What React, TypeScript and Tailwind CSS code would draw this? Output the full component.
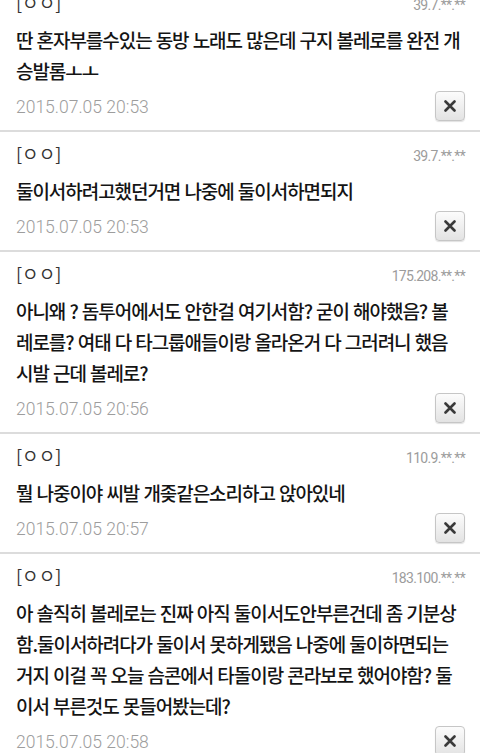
import React from "react";

type Comment = { ip: string; lines: string[]; date: string };

const comments: Comment[] = [
  {
    ip: "39.7.**.**",
    lines: ["딴 혼자부를수있는 동방 노래도 많은데 구지 볼레로를 완전 개", "승발롬ㅗㅗ"],
    date: "2015.07.05 20:53",
  },
  {
    ip: "39.7.**.**",
    lines: ["둘이서하려고했던거면 나중에 둘이서하면되지"],
    date: "2015.07.05 20:53",
  },
  {
    ip: "175.208.**.**",
    lines: [
      "아니왜 ? 돔투어에서도 안한걸 여기서함? 굳이 해야했음? 볼",
      "레로를? 여태 다 타그룹애들이랑 올라온거 다 그러려니 했음",
      "시발 근데 볼레로?",
    ],
    date: "2015.07.05 20:56",
  },
  {
    ip: "110.9.**.**",
    lines: ["뭘 나중이야 씨발 개좆같은소리하고 앉아있네"],
    date: "2015.07.05 20:57",
  },
  {
    ip: "183.100.**.**",
    lines: [
      "아 솔직히 볼레로는 진짜 아직 둘이서도안부른건데 좀 기분상",
      "함.둘이서하려다가 둘이서 못하게됐음 나중에 둘이하면되는",
      "거지 이걸 꼭 오늘 슴콘에서 타돌이랑 콘라보로 했어야함? 둘",
      "이서 부른것도 못들어봤는데?",
    ],
    date: "2015.07.05 20:58",
  },
];

function CloseButton() {
  return (
    <button className="flex h-[30px] w-[30px] items-center justify-center rounded-[4px] border border-[#c6c6c6] bg-gradient-to-b from-[#fcfcfc] to-[#e3e3e3] shadow-[0_1px_1px_rgba(0,0,0,0.12)]">
      <svg width="12" height="12" viewBox="0 0 12 12">
        <path d="M1.5 1.5 L10.5 10.5 M10.5 1.5 L1.5 10.5" stroke="#3a3a3a" strokeWidth="2.6" strokeLinecap="round" />
      </svg>
    </button>
  );
}

function CommentItem({ c }: { c: Comment }) {
  return (
    <div className="border-b-2 border-[#dcdcdc] pl-4 pr-[15px] pt-[9px] pb-[9px]">
      <div className="flex h-[24px] items-end justify-between">
        <span className="text-[18px] leading-[24px] text-[#333] [font-family:'Noto_Sans_CJK_KR',sans-serif]">
          [ㅇㅇ]
        </span>
        <span className="text-[14px] leading-[18px] tracking-[-0.7px] text-[#9c9c9c] [font-family:Roboto,sans-serif]">
          {c.ip}
        </span>
      </div>
      <div className="mt-[10px] text-[19px] font-medium leading-[31px] tracking-[-1.05px] [word-spacing:0.9px] text-[#141414] [font-family:'Noto_Sans_CJK_KR',sans-serif]">
        {c.lines.map((l, i) => (
          <div key={i} className="whitespace-nowrap">
            {l}
          </div>
        ))}
      </div>
      <div className="mt-[5px] flex h-[30px] items-center justify-between">
        <span className="pt-[3px] text-[17.5px] font-light text-[#9d9d9d] [font-family:Roboto,sans-serif]">
          {c.date}
        </span>
        <CloseButton />
      </div>
    </div>
  );
}

export default function App() {
  return (
    <div className="h-[753px] w-[480px] overflow-hidden bg-white">
      <div className="-mt-[19px]">
        {comments.map((c, i) => (
          <CommentItem key={i} c={c} />
        ))}
      </div>
    </div>
  );
}
